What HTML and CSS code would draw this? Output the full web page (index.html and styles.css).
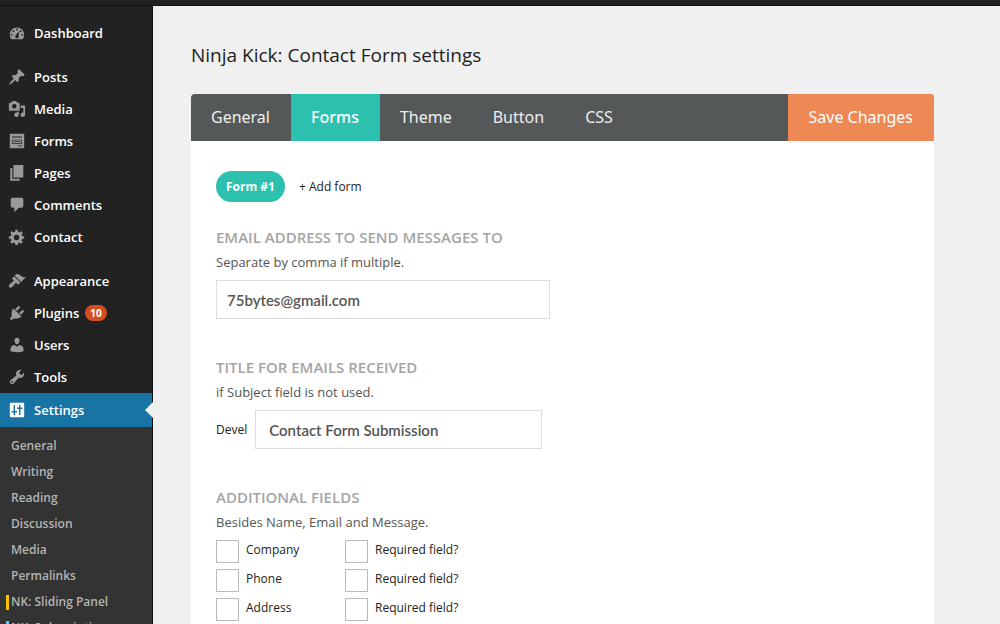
FILE: index.html
```html
<!DOCTYPE html>
<html lang="en">

<head>
    <meta charset="UTF-8">
    <meta name="viewport" content="width=device-width, initial-scale=1.0">
    <title>Ninja Kick: Contact Form settings</title>
    <link rel="stylesheet" href="styles.css">
</head>

<body>
    <div class="topbar"></div>

    <div class="wrap">
        <nav class="sidebar">
            <ul class="menu">
                <li><a href="#">
                    <svg viewBox="0 0 20 20"><path fill-rule="evenodd" d="M3.760 17h12.480c1.100-1.370 1.760-3.110 1.760-5 0-4.420-3.580-8-8-8s-8 3.580-8 8c0 1.890.66 3.630 1.760 5zM10 5a1 1 0 1 1 0 2 1 1 0 0 1 0-2zM6 7a1 1 0 1 1 0 2 1 1 0 0 1 0-2zm8 0a1 1 0 1 1 0 2 1 1 0 0 1 0-2zm-5.370 5.550L12 8v6a2 2 0 1 1-4 0c0-.57.24-1.080.63-1.450zM4 11a1 1 0 1 1 0 2 1 1 0 0 1 0-2zm12 0a1 1 0 1 1 0 2 1 1 0 0 1 0-2z"/></svg>
                    Dashboard</a></li>
            </ul>
            <ul class="menu">
                <li><a href="#">
                    <svg viewBox="0 0 20 20"><path d="M10.440 3.020l1.820-1.820 6.360 6.350-1.830 1.820c-1.050-.68-2.480-.57-3.410.36l-.75.75c-.92.93-1.040 2.350-.350 3.410l-1.830 1.820-2.410-2.410-2.800 2.790c-.42.42-3.380 2.710-3.800 2.290s1.860-3.390 2.280-3.810l2.790-2.790L4.100 9.360l1.830-1.820c1.050.69 2.480.57 3.400-.36l.75-.75c.930-.920 1.050-2.350.360-3.410z"/></svg>
                    Posts</a></li>
                <li><a href="#">
                    <svg viewBox="0 0 20 20"><path fill-rule="evenodd" d="M13 11V4c0-.55-.45-1-1-1h-1.670L9 1H5L3.670 3H2c-.55 0-1 .45-1 1v7c0 .55.45 1 1 1h10c.55 0 1-.45 1-1zM7 4.500a2.500 2.500 0 1 1 0 5 2.500 2.500 0 0 1 0-5zM14 6h5v10.500a2.500 2.500 0 1 1-2-2.450V9h-3zm-4 8.050V13h2v3.500a2.500 2.500 0 1 1-2-2.450z"/></svg>
                    Media</a></li>
                <li><a href="#">
                    <svg viewBox="0 0 20 20"><path fill-rule="evenodd" d="M2 2h16v16H2zm2.500 3v1h11V5zm0 3.500v4.500h11V8.500zm.8.800h9.400v2.900H5.300zm1.200 1v.9h7v-.9zM11 15v.9h4.500V15z"/></svg>
                    Forms</a></li>
                <li><a href="#">
                    <svg viewBox="0 0 20 20"><path d="M6 1h11v14H6zM2.500 4.500H4.800v12H13v2H2.500z"/></svg>
                    Pages</a></li>
                <li><a href="#">
                    <svg viewBox="0 0 20 20"><path d="M5 2h10a2 2 0 0 1 2 2v7a2 2 0 0 1-2 2h-3l-5 5v-5H5a2 2 0 0 1-2-2V4a2 2 0 0 1 2-2z"/></svg>
                    Comments</a></li>
                <li><a href="#">
                    <svg viewBox="0 0 20 20"><path fill-rule="evenodd" d="M18 12h-2.180c-.17.7-.44 1.350-.81 1.930l1.540 1.540-2.100 2.100-1.540-1.540c-.58.36-1.230.63-1.910.79V19H8v-2.180c-.68-.16-1.330-.43-1.910-.79l-1.540 1.540-2.120-2.120 1.540-1.540c-.36-.58-.63-1.230-.79-1.910H1V9.030h2.170c.16-.7.44-1.350.8-1.940L2.430 5.550l2.100-2.100 1.540 1.540c.58-.37 1.240-.64 1.930-.81V2h3v2.180c.68.16 1.330.43 1.910.79l1.540-1.540 2.120 2.120-1.540 1.540c.36.59.64 1.240.8 1.940H18zm-8.500 1.500a3 3 0 1 0 0-6 3 3 0 0 0 0 6z"/></svg>
                    Contact</a></li>
            </ul>
            <ul class="menu">
                <li><a href="#">
                    <svg viewBox="0 0 20 20"><path d="M14.480 11.060L7.410 3.990l1.500-1.500c.5-.56 2.300-.47 3.510.32 1.210.8 1.430 1.280 2.910 2.100 1.180.64 2.450 1.260 4.450.85zm-.71.71L6.700 4.700 4.930 6.470c-.39.39-.39 1.020 0 1.410l1.060 1.060c.39.39.39 1.030 0 1.420-.6.6-1.430 1.110-2.210 1.690-.35.26-.7.53-1.010.84C1.430 14.230.4 16.080 1.400 17.070c.99 1 2.840-.03 4.180-1.360.31-.31.58-.66.85-1.020.57-.78 1.080-1.610 1.690-2.210.39-.39 1.020-.39 1.410 0l1.060 1.060c.39.39 1.020.39 1.410 0z"/></svg>
                    Appearance</a></li>
                <li><a href="#">
                    <svg viewBox="0 0 20 20"><path d="M13.110 4.360L9.870 7.600 8 5.730l3.240-3.240c.35-.34 1.050-.2 1.560.32.52.51.66 1.210.31 1.550zm-8 1.770l.91-1.120 9.010 9.010-1.190.84c-.71.71-2.630 1.160-3.820 1.160H6.140L4.900 17.260c-.59.59-1.540.59-2.120 0-.59-.58-.59-1.530 0-2.120l1.240-1.240v-3.880c0-1.130.4-3.190 1.090-3.890zm7.260 3.970l3.240-3.240c.34-.35 1.040-.21 1.550.31.52.51.66 1.210.31 1.550l-3.240 3.250z"/></svg>
                    Plugins <span class="badge">10</span></a></li>
                <li><a href="#">
                    <svg viewBox="0 0 20 20"><path d="M10 9.250c-2.270 0-2.730-3.440-2.730-3.440C7 4.020 7.820 2 9.970 2c2.160 0 2.980 2.020 2.710 3.810 0 0-.41 3.440-2.680 3.440zm0 2.570L12.720 10c2.390 0 4.520 2.330 4.520 4.530v2.490s-3.650 1.130-7.240 1.130c-3.650 0-7.240-1.130-7.240-1.130v-2.490c0-2.250 1.940-4.480 4.470-4.480z"/></svg>
                    Users</a></li>
                <li><a href="#">
                    <svg viewBox="0 0 20 20"><path fill-rule="evenodd" d="M16.680 9.770c-1.340 1.340-3.300 1.670-4.950.99l-5.410 6.520c-.99.99-2.590.99-3.580 0s-.99-2.590 0-3.570l6.520-5.420c-.68-1.650-.35-3.610.99-4.950 1.280-1.280 3.120-1.620 4.720-1.060l-2.890 2.890 2.820 2.820 2.860-2.870c.53 1.580.18 3.390-1.080 4.650zM3.810 16.210c.4.39 1.040.39 1.430 0 .4-.4.4-1.040 0-1.430-.39-.4-1.030-.4-1.430 0-.39.39-.39 1.030 0 1.430z"/></svg>
                    Tools</a></li>
                <li class="current"><a href="#">
                    <svg viewBox="0 0 20 20"><path fill-rule="evenodd" d="M3 2h14a1 1 0 0 1 1 1v14a1 1 0 0 1-1 1H3a1 1 0 0 1-1-1V3a1 1 0 0 1 1-1zm3.200 2.500v6.500H4v1.800h2.200v2.700h1.600v-2.700H10V11H7.800V4.500zm6 0v2.700H10V9h2.200v6.500h1.600V9H16V7.200h-2.200V4.500z"/></svg>
                    Settings</a></li>
            </ul>
            <ul class="submenu">
                <li><a href="#">General</a></li>
                <li><a href="#">Writing</a></li>
                <li><a href="#">Reading</a></li>
                <li><a href="#">Discussion</a></li>
                <li><a href="#">Media</a></li>
                <li><a href="#">Permalinks</a></li>
                <li><a href="#" class="nk yellow">NK: Sliding Panel</a></li>
                <li><a href="#" class="nk blue">NK: Subscription</a></li>
            </ul>
        </nav>

        <main>
            <h1>Ninja Kick: Contact Form settings</h1>

            <form class="panel">
                <div class="tabs">
                    <a href="#">General</a>
                    <a href="#" class="active">Forms</a>
                    <a href="#">Theme</a>
                    <a href="#">Button</a>
                    <a href="#">CSS</a>
                    <button type="button" class="save">Save Changes</button>
                </div>

                <div class="panel-body">
                    <div class="forms-list">
                        <button type="button" class="pill">Form #1</button>
                        <a href="#">+ Add form</a>
                    </div>

                    <section>
                        <h2><label for="email">Email address to send messages to</label></h2>
                        <p>Separate by comma if multiple.</p>
                        <input type="text" id="email" class="text" value="75bytes@gmail.com">
                    </section>

                    <section>
                        <h2>Title for emails received</h2>
                        <p>if Subject field is not used.</p>
                        <div class="row">
                            <label for="subject">Devel</label>
                            <input type="text" id="subject" class="text subject" value="Contact Form Submission">
                        </div>
                    </section>

                    <section>
                        <h2>Additional fields</h2>
                        <p>Besides Name, Email and Message.</p>
                        <div class="fields">
                            <label><input type="checkbox">Company</label>
                            <label><input type="checkbox">Required field?</label>
                            <label><input type="checkbox">Phone</label>
                            <label><input type="checkbox">Required field?</label>
                            <label><input type="checkbox">Address</label>
                            <label><input type="checkbox">Required field?</label>
                        </div>
                    </section>
                </div>
            </form>
        </main>
    </div>
</body>

</html>
```

FILE: styles.css
```css
* {
    margin: 0;
    padding: 0;
    box-sizing: border-box;
}

body {
    font-family: "Open Sans", "Noto Sans", sans-serif;
    font-size: 12px;
    font-weight: 500;
    color: #222;
    background-color: #f0f0f0;
}

a {
    color: inherit;
    text-decoration: none;
}

ul {
    list-style: none;
}

.topbar {
    height: 6px;
    background-color: #222;
    border-bottom: 1px solid #111;
}

.wrap {
    display: flex;
}

/* sidebar */
.sidebar {
    width: 153px;
    flex-shrink: 0;
    padding-top: 11px;
    background-color: #222;
    border-right: 1px solid #111;
}

.menu {
    margin-bottom: 12px;
}

.menu a {
    display: flex;
    align-items: center;
    height: 32px;
    padding-left: 8px;
    font-size: 13px;
    font-weight: 600;
    color: #fff;
}

.menu svg {
    width: 18px;
    height: 18px;
    margin-right: 8px;
    fill: #999;
}

.badge {
    margin-left: 6px;
    padding: 0 5px;
    border-radius: 8px;
    font-size: 10px;
    font-weight: 700;
    line-height: 16px;
    background-color: #d54e21;
}

.menu:has(.current) {
    margin-bottom: 0;
}

.menu .current a {
    position: relative;
    height: 34px;
    background-color: #1874a4;
}

.menu .current svg {
    fill: #fff;
}

.current a::after {
    content: "";
    position: absolute;
    right: -1px;
    border: 8px solid transparent;
    border-right-color: #f0f0f0;
}

.submenu {
    padding: 6px 0;
    background-color: #333;
}

.submenu a {
    display: block;
    padding-left: 11px;
    font-weight: 600;
    line-height: 26px;
    color: #b4b4b4;
}

.submenu .nk {
    display: flex;
    align-items: center;
    padding-left: 6px;
}

.nk::before {
    content: "";
    width: 3px;
    height: 15px;
    margin-right: 2px;
}

.yellow::before {
    background-color: #ffc400;
}

.blue::before {
    background-color: #5ccfee;
}

/* content */
main {
    flex: 1;
    padding: 34px 66px 0 38px;
}

h1 {
    font-size: 19px;
    font-weight: 400;
    line-height: 30px;
}

.panel {
    margin-top: 24px;
    border-radius: 4px 4px 0 0;
    background-color: #fff;
    overflow: hidden;
}

.tabs {
    display: flex;
    height: 47px;
    font-family: "Noto Sans", sans-serif;
    font-size: 16px;
    font-weight: 400;
    line-height: 47px;
    color: #eee;
    background-color: #555859;
}

.tabs a {
    padding: 0 21px 0 20px;
}

.tabs .active {
    font-weight: 500;
    color: #fff;
    background-color: #2cc1ae;
}

.save {
    margin-left: auto;
    padding: 0 21px;
    border: none;
    font: inherit;
    color: #fff;
    background-color: #ee8855;
}

.panel-body {
    padding: 30px 25px;
}

.forms-list {
    display: flex;
    align-items: center;
    gap: 14px;
    margin-bottom: 23px;
}

.pill {
    height: 31px;
    padding: 0 10px;
    border: none;
    border-radius: 16px;
    font: inherit;
    font-weight: 700;
    color: #fff;
    background-color: #2cc1ae;
}

section {
    margin-bottom: 36px;
}

h2 {
    font-size: 15px;
    font-weight: 600;
    line-height: 24px;
    text-transform: uppercase;
    color: #a5a5a5;
}

section p {
    margin-bottom: 5px;
    font-size: 13px;
    font-weight: 400;
    line-height: 26px;
    color: #555;
}

.text {
    display: block;
    width: 334px;
    height: 39px;
    padding: 0 10px;
    border: 1px solid #ddd;
    font-family: Lato, sans-serif;
    font-size: 15px;
    font-weight: 600;
    color: #555;
    background-color: #fff;
}

.row {
    display: flex;
    align-items: center;
    gap: 8px;
}

.subject {
    width: 287px;
    padding: 0 13px;
}

.fields {
    display: grid;
    grid-template-columns: 129px 1fr;
    row-gap: 6px;
}

.fields label {
    display: flex;
    gap: 7px;
    line-height: 20px;
}

.fields input {
    appearance: none;
    width: 23px;
    height: 23px;
    border: 1px solid #bbb;
    background-color: #fff;
}
```
